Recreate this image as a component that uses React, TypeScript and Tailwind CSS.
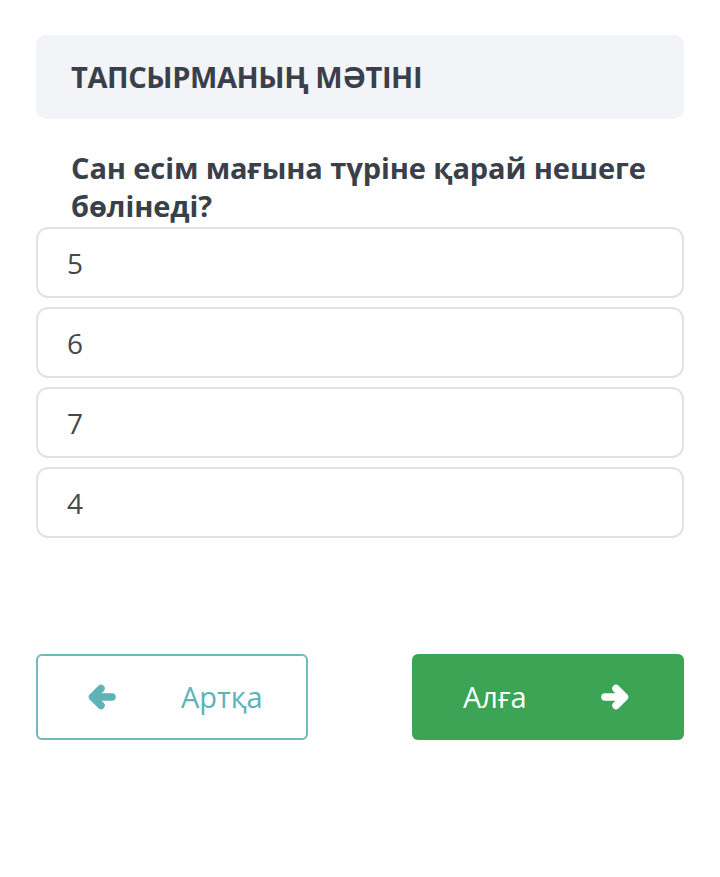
const options = ["5", "6", "7", "4"];

const Arrow = ({ dir, className }: { dir: "left" | "right"; className?: string }) => (
  <svg viewBox="0 0 30 28" className={className} fill="none" stroke="currentColor" strokeWidth={7.5} strokeLinecap="round" strokeLinejoin="round">
    {dir === "left" ? (
      <>
        <path d="M6 14H25" />
        <path d="M14 5.5L5.5 14L14 22.5" />
      </>
    ) : (
      <>
        <path d="M5 14H24" />
        <path d="M16 5.5L24.5 14L16 22.5" />
      </>
    )}
  </svg>
);

const App = () => {
  return (
    <div className="min-h-screen bg-white px-9 pt-[35px] font-['Open_Sans',sans-serif]">
      <div className="h-[84px] rounded-[10px] bg-[#f3f4f7] px-[35px] flex items-center">
        <h1 className="text-[29px] font-bold text-[#3a404a] tracking-[-0.4px]">ТАПСЫРМАНЫҢ МӘТІНІ</h1>
      </div>

      <p className="mt-[30px] pl-[35px] text-[29px] leading-[38px] font-bold text-[#3a404a] tracking-[-0.1px]">
        Сан есім мағына түріне қарай нешеге бөлінеді?
      </p>

      <div className="mt-[2px] flex flex-col gap-[9px]">
        {options.map((opt) => (
          <div
            key={opt}
            className="h-[71px] rounded-[12px] border-2 border-[#e2e2e2] px-[29px] flex items-center text-[28px] text-[#45484d]"
          >
            {opt}
          </div>
        ))}
      </div>

      <div className="mt-[116px] flex justify-between">
        <button className="w-[272px] h-[86px] rounded-[6px] border-2 border-[#72b9bb] flex items-center pl-[49px] text-[#5db3b5] text-[29px]">
          <Arrow dir="left" className="w-[30px] h-[28px]" />
          <span className="ml-[64px]">Артқа</span>
        </button>
        <button className="w-[272px] h-[86px] rounded-[6px] bg-[#3ca555] flex items-center pl-[51px] text-white text-[29px]">
          <span>Алға</span>
          <Arrow dir="right" className="ml-[73px] w-[30px] h-[28px]" />
        </button>
      </div>
    </div>
  );
};

export default App;
